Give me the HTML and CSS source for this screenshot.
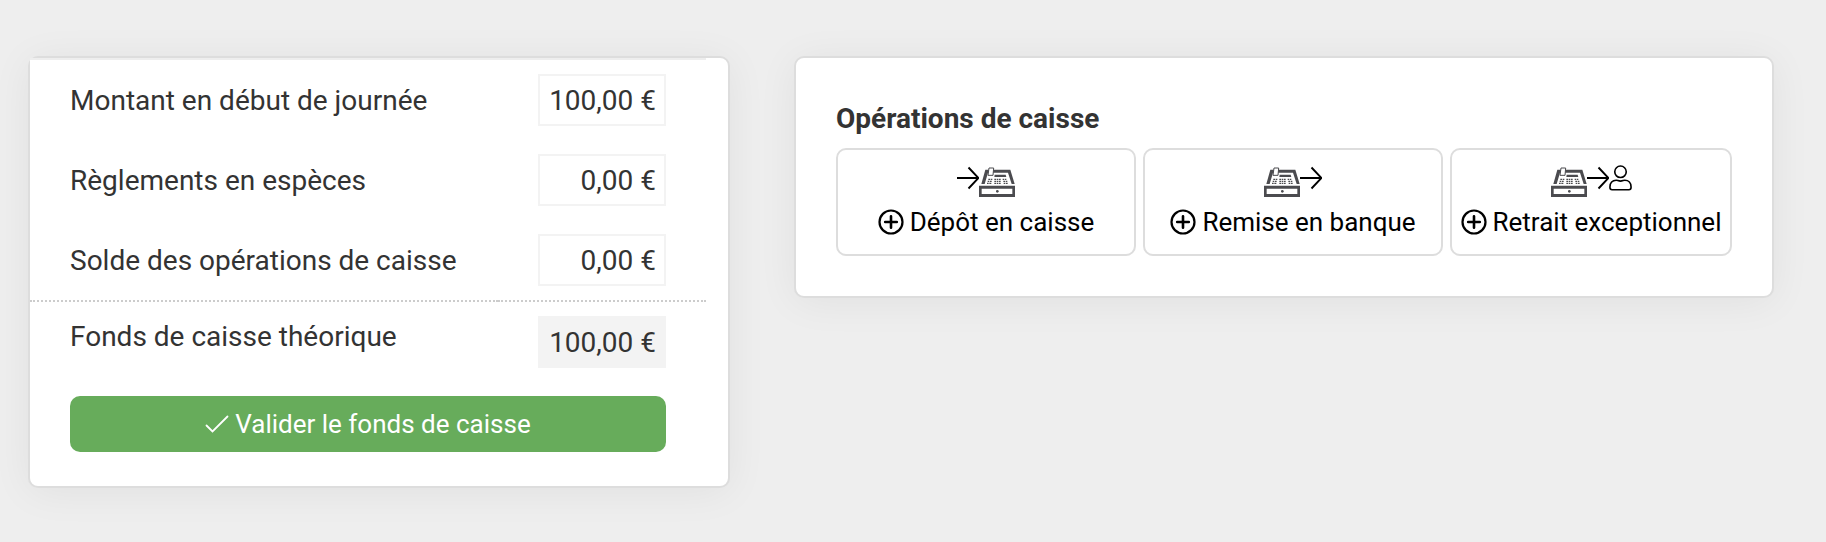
FILE: index.html
```
<!DOCTYPE html>
<html lang="fr">
<head>
    <meta charset="UTF-8">
    <meta name="viewport" content="width=device-width, initial-scale=1.0">
    <title>Fonds de caisse</title>
    <link rel="stylesheet" href="styles.css">
</head>
<body>

    <!-- Icônes réutilisées dans les boutons -->
    <svg class="sprite" aria-hidden="true">
        <symbol id="icon-arrow" viewBox="0 0 22 24">
            <path d="M0 12H21.500M11.500 1.500L21.500 12L11.500 22.500" fill="none" stroke="currentColor" stroke-width="1.900"/>
        </symbol>
        <symbol id="icon-user" viewBox="0 0 24 28">
            <circle cx="12" cy="7.500" r="6" fill="none" stroke="currentColor" stroke-width="1.700"/>
            <path d="M7.500 16.300C3.500 16.300 1 19 1 23V24C1 25.500 2 26.200 3.200 26.200H20.800C22 26.200 23 25.500 23 24V23C23 19 20.500 16.300 16.500 16.300C15 16.300 14.300 17.200 12 17.200S9 16.300 7.500 16.300Z" fill="none" stroke="currentColor" stroke-width="1.700"/>
        </symbol>
        <symbol id="icon-plus" viewBox="0 0 26 26">
            <circle cx="13" cy="13" r="11.500" fill="none" stroke="currentColor" stroke-width="2.200"/>
            <path d="M13 7.200V18.800M7.200 13H18.800" fill="none" stroke="currentColor" stroke-width="2.600" stroke-linecap="round"/>
        </symbol>
        <symbol id="icon-check" viewBox="0 0 24 20">
            <path d="M1.500 11.500L7.500 17.500L22.500 2.500" fill="none" stroke="currentColor" stroke-width="1.800" stroke-linecap="round"/>
        </symbol>
        <symbol id="icon-register" viewBox="0 0 108 90">
            <path d="M19 8H94L107 51H98L87 17H27L17 51H7Z" fill="#4b4b4f"/>
            <path d="M30 3H44L42 25H27Z" fill="#fff" stroke="#4b4b4f" stroke-width="3"/>
            <path d="M47 23H80L82 30H46Z" fill="#4b4b4f"/>
            <path d="M28 37H41M26 43H40M24 49H39M46 37H65M46 43H66M46 49H66M71 37H82M73 43H85M74 49H87" fill="none" stroke="#4b4b4f" stroke-width="4" stroke-dasharray="5 2"/>
            <path d="M0 56H108V90H0ZM8 65V81H100V65Z" fill="#4b4b4f" fill-rule="evenodd"/>
            <circle cx="55" cy="73" r="4" fill="#4b4b4f"/>
        </symbol>
    </svg>

    <main class="page">
        <section class="card card-fonds">
            <table class="fonds">
                <tbody>
                    <tr>
                        <td><label for="montant">Montant en début de journée</label></td>
                        <td class="valeur"><input type="text" id="montant" value="100,00 €" readonly></td>
                    </tr>
                    <tr>
                        <td><label for="reglements">Règlements en espèces</label></td>
                        <td class="valeur"><input type="text" id="reglements" value="0,00 €" readonly></td>
                    </tr>
                    <tr>
                        <td><label for="solde">Solde des opérations de caisse</label></td>
                        <td class="valeur"><input type="text" id="solde" value="0,00 €" readonly></td>
                    </tr>
                    <tr class="total">
                        <td><label for="theorique">Fonds de caisse théorique</label></td>
                        <td class="valeur"><input type="text" id="theorique" value="100,00 €" readonly></td>
                    </tr>
                </tbody>
            </table>
            <div class="actions">
                <button type="button" class="btn-valider">
                    <svg class="check"><use href="#icon-check"/></svg>
                    <span>Valider le fonds de caisse</span>
                </button>
            </div>
        </section>

        <section class="card card-operations">
            <h2>Opérations de caisse</h2>
            <div class="operations">
                <button type="button" class="btn-operation">
                    <span class="icons">
                        <svg class="arrow"><use href="#icon-arrow"/></svg>
                        <svg class="register"><use href="#icon-register"/></svg>
                    </span>
                    <span class="libelle"><svg class="plus"><use href="#icon-plus"/></svg>Dépôt en caisse</span>
                </button>
                <button type="button" class="btn-operation">
                    <span class="icons">
                        <svg class="register"><use href="#icon-register"/></svg>
                        <svg class="arrow"><use href="#icon-arrow"/></svg>
                    </span>
                    <span class="libelle"><svg class="plus"><use href="#icon-plus"/></svg>Remise en banque</span>
                </button>
                <button type="button" class="btn-operation">
                    <span class="icons">
                        <svg class="register"><use href="#icon-register"/></svg>
                        <svg class="arrow"><use href="#icon-arrow"/></svg>
                        <svg class="user"><use href="#icon-user"/></svg>
                    </span>
                    <span class="libelle"><svg class="plus"><use href="#icon-plus"/></svg>Retrait exceptionnel</span>
                </button>
            </div>
        </section>
    </main>

</body>
</html>
```
FILE: styles.css
```
* {
    box-sizing: border-box;
}
body {
    margin: 0;
    background-color: #eee;
    color: #333;
    font-family: Roboto, sans-serif;
    font-size: 28px;
    line-height: 42px;
}
button, input {
    font-family: inherit;
    color: inherit;
}
.sprite {
    display: none;
}
.page {
    display: grid;
    grid-template-columns: 351fr 490fr;
    gap: 64px;
    align-items: start;
    padding: 56px 52px 54px 28px;
}
.card {
    background-color: #fff;
    border: 2px solid #ddd;
    border-radius: 10px;
    box-shadow: 0 4px 40px rgba(0, 0, 0, 0.06);
}

/* Fonds de caisse */
.card-fonds {
    padding: 0 22px 34px 0;
}
.fonds {
    width: 100%;
    border-spacing: 0;
    border-top: 2px solid #eee;
    background-color: #fff;
}
.fonds td {
    padding: 14px 0 14px 40px;
    vertical-align: baseline;
}
.fonds .valeur {
    width: 208px;
    padding-right: 40px;
}
.fonds label,
.fonds input {
    display: block;
}
.fonds input {
    width: 100%;
    height: 52px;
    padding: 0 8px;
    border: 2px solid #f3f3f3;
    background-color: #fff;
    font-size: 28px;
    text-align: right;
}
.fonds .total td {
    border-top: 2px dotted #ccc;
    vertical-align: top;
}
.fonds .total input {
    background-color: #f3f3f3;
}
.actions {
    padding: 14px 40px 0;
}
.btn-valider {
    display: flex;
    align-items: center;
    justify-content: center;
    gap: 6px;
    width: 100%;
    height: 56px;
    border: none;
    border-radius: 10px;
    background-color: #67ac5b;
    color: #fff;
    font-size: 26px;
    cursor: pointer;
}
.check {
    width: 24px;
    height: 20px;
}

/* Opérations de caisse */
.card-operations {
    padding: 40px;
}
.card-operations h2 {
    margin: 0 0 8px;
    font-size: 28px;
    font-weight: bold;
}
.operations {
    display: grid;
    grid-template-columns: 50fr 50fr 47fr;
    gap: 7px;
}
.btn-operation {
    display: flex;
    flex-direction: column;
    align-items: center;
    justify-content: flex-start;
    height: 108px;
    padding: 14px 0 8px;
    border: 2px solid #ddd;
    border-radius: 10px;
    background-color: #fff;
    color: #000;
    font-size: 26px;
    line-height: 40px;
    white-space: nowrap;
    cursor: pointer;
}
.icons {
    display: flex;
    height: 38px;
}
.arrow {
    width: 22px;
    height: 24px;
    margin-top: 2px;
}
.register {
    width: 36px;
    height: 30px;
    margin-top: 3px;
}
.user {
    width: 23px;
    height: 28px;
}
.libelle {
    display: flex;
    align-items: center;
    gap: 6px;
}
.plus {
    width: 26px;
    height: 26px;
}
.btn-valider:hover {
    background-color: #5a9c4f;
}
.btn-operation:hover {
    background-color: #f7f7f7;
}
```
